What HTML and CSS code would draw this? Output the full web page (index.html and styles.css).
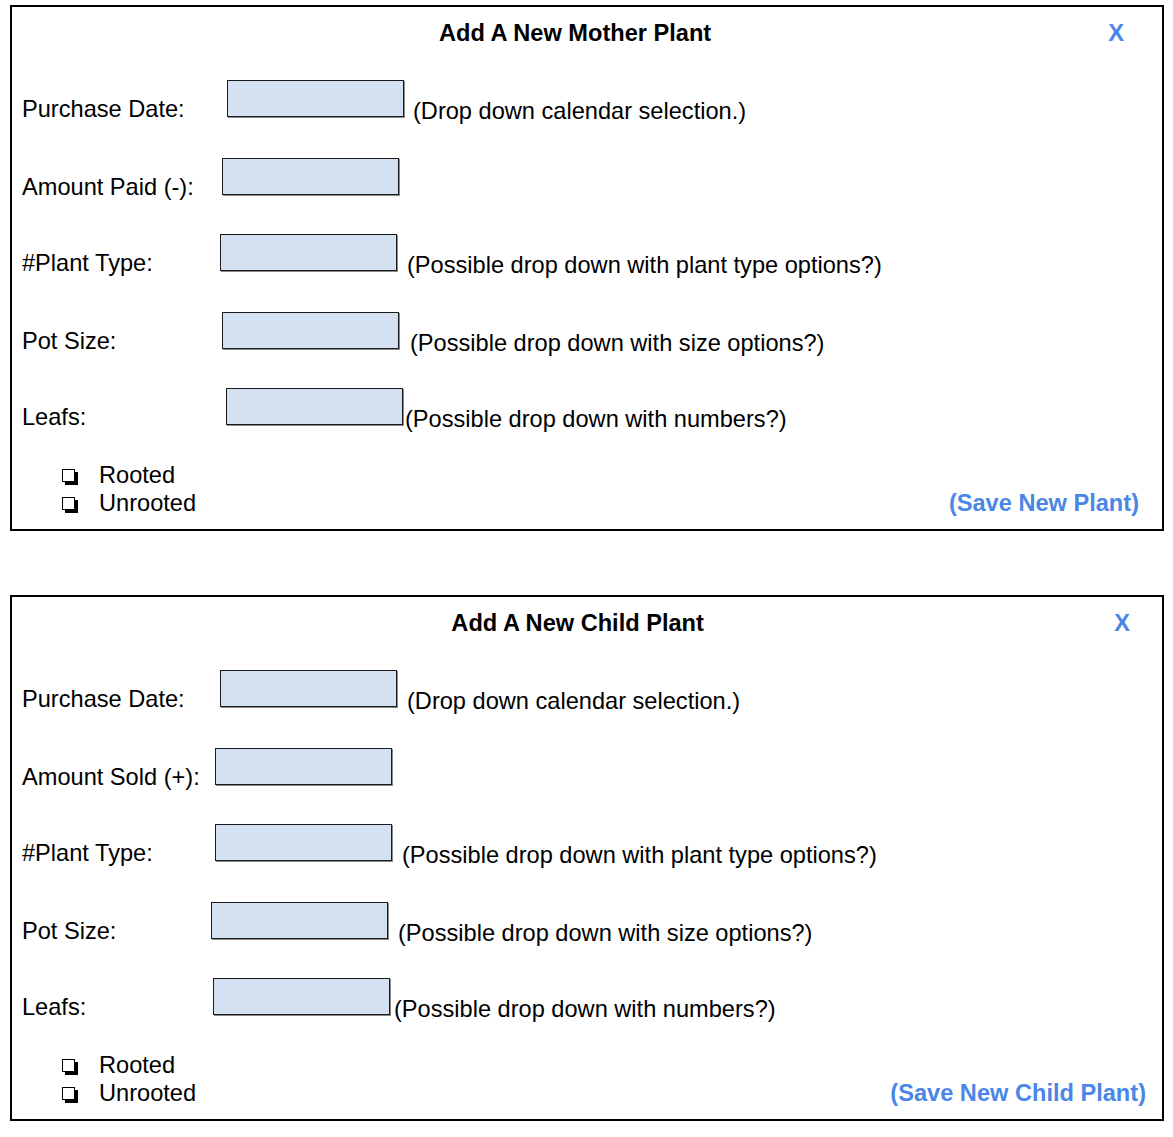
FILE: index.html
```html
<!DOCTYPE html>
<html>
<head>
<meta charset="utf-8">
<title>Add Plant</title>
<link rel="stylesheet" href="styles.css">
</head>
<body>
<section class="panel">
  <div class="head">
    <h2 class="title">Add A New Mother Plant</h2>
    <span class="close close-1">X</span>
  </div>
  <div class="rows">
    <div class="row"><span class="label lw-205">Purchase Date:</span><span class="field"></span><span class="note nm-9">(Drop down calendar selection.)</span></div>
    <div class="row"><span class="label lw-200">Amount Paid (-):</span><span class="field"></span></div>
    <div class="row"><span class="label lw-198">#Plant Type:</span><span class="field"></span><span class="note nm-10">(Possible drop down with plant type options?)</span></div>
    <div class="row"><span class="label lw-200">Pot Size:</span><span class="field"></span><span class="note nm-11">(Possible drop down with size options?)</span></div>
    <div class="row"><span class="label lw-204">Leafs:</span><span class="field"></span><span class="note nm-2">(Possible drop down with numbers?)</span></div>
  </div>
  <div class="foot">
    <ul class="checks">
      <li><span class="box"></span>Rooted</li>
      <li><span class="box"></span>Unrooted</li>
    </ul>
    <span class="save save-1">(Save New Plant)</span>
  </div>
</section>

<section class="panel panel-2">
  <div class="head">
    <h2 class="title title-2">Add A New Child Plant</h2>
    <span class="close close-2">X</span>
  </div>
  <div class="rows">
    <div class="row"><span class="label lw-198">Purchase Date:</span><span class="field"></span><span class="note nm-10">(Drop down calendar selection.)</span></div>
    <div class="row"><span class="label lw-193">Amount Sold (+):</span><span class="field"></span></div>
    <div class="row"><span class="label lw-193">#Plant Type:</span><span class="field"></span><span class="note nm-10">(Possible drop down with plant type options?)</span></div>
    <div class="row"><span class="label lw-189">Pot Size:</span><span class="field"></span><span class="note nm-10">(Possible drop down with size options?)</span></div>
    <div class="row"><span class="label lw-191">Leafs:</span><span class="field"></span><span class="note nm-4">(Possible drop down with numbers?)</span></div>
  </div>
  <div class="foot">
    <ul class="checks">
      <li><span class="box"></span>Rooted</li>
      <li><span class="box"></span>Unrooted</li>
    </ul>
    <span class="save save-2">(Save New Child Plant)</span>
  </div>
</section>
</body>
</html>
```

FILE: styles.css
```css
* { box-sizing: border-box; }

body {
  margin: 0;
  padding: 5px 0 0 10px;
  background: #fff;
  color: #000;
  font-family: "Liberation Sans", Arial, sans-serif;
  font-size: 23.6px;
  line-height: 28px;
}

.panel {
  width: 1154px;
  border: 2px solid #000;
  padding: 0 0 12px 0;
}

.panel-2 {
  margin-top: 64px;
}

.head {
  display: flex;
  align-items: baseline;
  padding-top: 12px;
  margin-bottom: 33px;
}

.title {
  flex: 1;
  margin: 0 0 0 30px;
  font-size: 23.6px;
  line-height: 28px;
  font-weight: bold;
  text-align: center;
}

.title-2 {
  margin-left: 29px;
}

.close {
  font-weight: bold;
  color: #4a86e8;
}

.close-1 { margin-right: 38px; }
.close-2 { margin-right: 32px; }

.rows {
  display: flex;
  flex-direction: column;
  padding-left: 10px;
}

.row {
  display: flex;
  align-items: baseline;
  white-space: nowrap;
}

.row + .row { margin-top: 33px; }
.row:nth-child(2), .row:nth-child(4) { margin-top: 35px; }

.label { display: inline-block; }

.lw-205 { width: 205px; }
.lw-204 { width: 204px; }
.lw-200 { width: 200px; }
.lw-198 { width: 198px; }
.lw-193 { width: 193px; }
.lw-191 { width: 191px; }
.lw-189 { width: 189px; }

.field {
  display: inline-block;
  width: 177px;
  height: 37px;
  background: #d3e1f2;
  border: 1px solid #1a1a1a;
  box-shadow: 1px 1px 0 #8a8a8a;
}

.note { position: relative; top: 2px; }

.nm-2 { margin-left: 2px; }
.nm-4 { margin-left: 4px; }
.nm-9 { margin-left: 9px; }
.nm-10 { margin-left: 10px; }
.nm-11 { margin-left: 11px; }

.foot {
  display: flex;
  justify-content: space-between;
  align-items: flex-end;
  margin-top: 30px;
}

.checks {
  list-style: none;
  margin: 0;
  padding: 0 0 0 50px;
}

.checks li {
  display: flex;
  align-items: center;
  height: 28px;
}

.box {
  display: inline-block;
  width: 13px;
  height: 13px;
  border: 1.5px solid #000;
  box-shadow: 3px 3px 0 #000;
  margin: 0 24px 0 0;
}

.save {
  font-weight: bold;
  color: #4a86e8;
}

.save-1 { margin-right: 23px; }
.save-2 { margin-right: 16px; }
```
